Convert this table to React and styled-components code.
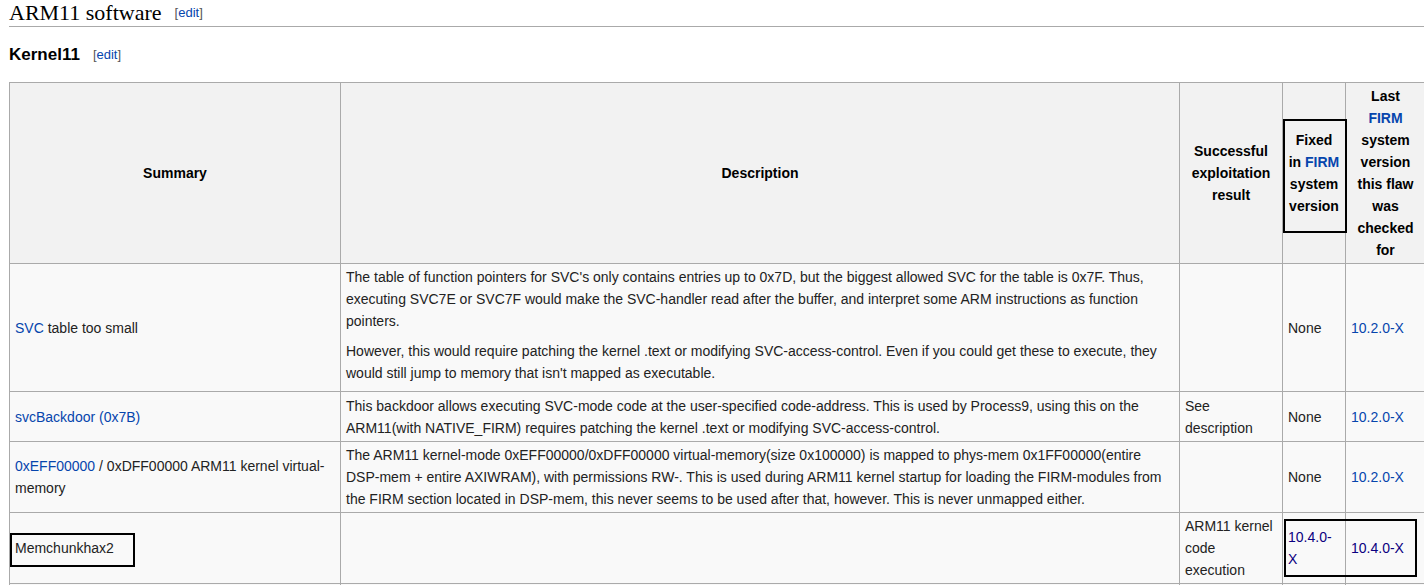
import React from "react";
import styled, { createGlobalStyle } from "styled-components";

const GlobalStyle = createGlobalStyle`
  html, body {
    margin: 0;
    padding: 0;
    overflow: hidden;
    background: #ffffff;
  }
`;

const Page = styled.div`
  position: relative;
  padding-left: 9px;
  font-family: "Liberation Sans", Arial, sans-serif;
  font-size: 14px;
  color: #222222;
`;

const SectionTitle = styled.h2`
  margin: 0;
  font-family: "Liberation Serif", "Times New Roman", serif;
  font-size: 22px;
  font-weight: normal;
  line-height: 26px;
  color: #000000;
  border-bottom: 1px solid #aaaaaa;
`;

const SubTitle = styled.h3`
  margin: 18px 0 0;
  font-size: 17px;
  font-weight: bold;
  line-height: 20px;
  color: #000000;
`;

const EditLink = styled.span`
  margin-left: 13px;
  font-family: "Liberation Sans", Arial, sans-serif;
  font-size: 13px;
  font-weight: normal;
  color: #555555;
  vertical-align: ${(props) => (props.$raise ? "3px" : "1px")};

  a {
    color: #0645ad;
    text-decoration: none;
  }
`;

const Table = styled.table`
  margin-top: 17px;
  width: 1416px;
  table-layout: fixed;
  border-collapse: collapse;
  background: #f9f9f9;
  line-height: 22px;
`;

const Row = styled.tr`
  height: ${(props) => props.$h}px;
`;

const Head = styled.th`
  padding: 1px 5px;
  border: 1px solid #aaaaaa;
  background: #f2f2f2;
  font-size: 14px;
  font-weight: bold;
  text-align: center;
  vertical-align: middle;
  color: #000000;
`;

const Cell = styled.td`
  padding: 1px 5px;
  border: 1px solid #aaaaaa;
  vertical-align: middle;
  text-align: left;

  p {
    margin: 0 0 8px;
  }
  p:last-child {
    margin-bottom: 6px;
  }
`;

const Link = styled.a`
  color: ${(props) => (props.$visited ? "#0b0080" : "#0645ad")};
  text-decoration: none;
`;

const Mark = styled.div`
  position: absolute;
  border: 2px solid #000000;
  box-sizing: border-box;
  pointer-events: none;
`;

const columns = [331, 839, 103, 63, 80];

const rows = [
  {
    h: 128,
    summary: (
      <>
        <Link href="#">SVC</Link> table too small
      </>
    ),
    desc: (
      <>
        <p>
          The table of function pointers for SVC's only contains entries up to 0x7D, but the
          biggest allowed SVC for the table is 0x7F. Thus, executing SVC7E or SVC7F would make
          the SVC-handler read after the buffer, and interpret some ARM instructions as function
          pointers.
        </p>
        <p>
          However, this would require patching the kernel .text or modifying SVC-access-control.
          Even if you could get these to execute, they would still jump to memory that isn't
          mapped as executable.
        </p>
      </>
    ),
    result: "",
    fixed: "None",
    last: "10.2.0-X",
  },
  {
    h: 50,
    summary: <Link href="#">svcBackdoor (0x7B)</Link>,
    desc:
      "This backdoor allows executing SVC-mode code at the user-specified code-address. This is used by Process9, using this on the ARM11(with NATIVE_FIRM) requires patching the kernel .text or modifying SVC-access-control.",
    result: "See description",
    fixed: "None",
    last: "10.2.0-X",
  },
  {
    h: 71,
    summary: (
      <>
        <Link href="#">0xEFF00000</Link> / 0xDFF00000 ARM11 kernel virtual-memory
      </>
    ),
    desc:
      "The ARM11 kernel-mode 0xEFF00000/0xDFF00000 virtual-memory(size 0x100000) is mapped to phys-mem 0x1FF00000(entire DSP-mem + entire AXIWRAM), with permissions RW-. This is used during ARM11 kernel startup for loading the FIRM-modules from the FIRM section located in DSP-mem, this never seems to be used after that, however. This is never unmapped either.",
    result: "",
    fixed: "None",
    last: "10.2.0-X",
  },
  {
    h: 71,
    summary: "Memchunkhax2",
    desc: "",
    result: "ARM11 kernel code execution",
    fixed: <Link href="#" $visited>10.4.0-X</Link>,
    last: <Link href="#" $visited>10.4.0-X</Link>,
  },
  {
    h: 44,
    summary: "",
    desc: "",
    result: "",
    fixed: "",
    last: "",
  },
];

const App = () => {
  return (
    <Page>
      <GlobalStyle />
      <SectionTitle>
        ARM11 software
        <EditLink $raise>
          [<a href="#">edit</a>]
        </EditLink>
      </SectionTitle>
      <SubTitle>
        Kernel11
        <EditLink>
          [<a href="#">edit</a>]
        </EditLink>
      </SubTitle>

      <Table>
        <colgroup>
          {columns.map((w, i) => (
            <col key={i} style={{ width: w }} />
          ))}
        </colgroup>
        <thead>
          <Row $h={181}>
            <Head>Summary</Head>
            <Head>Description</Head>
            <Head>Successful exploitation result</Head>
            <Head>
              Fixed in <Link href="#">FIRM</Link> system version
            </Head>
            <Head>
              Last
              <br />
              <Link href="#">FIRM</Link> system version this flaw was checked for
            </Head>
          </Row>
        </thead>
        <tbody>
          {rows.map((r, i) => (
            <Row key={i} $h={r.h}>
              <Cell>{r.summary}</Cell>
              <Cell>{r.desc}</Cell>
              <Cell>{r.result}</Cell>
              <Cell>{r.fixed}</Cell>
              <Cell>
                {typeof r.last === "string" && r.last ? <Link href="#">{r.last}</Link> : r.last}
              </Cell>
            </Row>
          ))}
        </tbody>
      </Table>

      {/* hand-drawn annotation boxes over the table */}
      <Mark style={{ left: 1283, top: 119, width: 64, height: 114 }} />
      <Mark style={{ left: 10, top: 533, width: 125, height: 34 }} />
      <Mark style={{ left: 1284, top: 519, width: 133, height: 58 }} />
    </Page>
  );
};

export default App;
